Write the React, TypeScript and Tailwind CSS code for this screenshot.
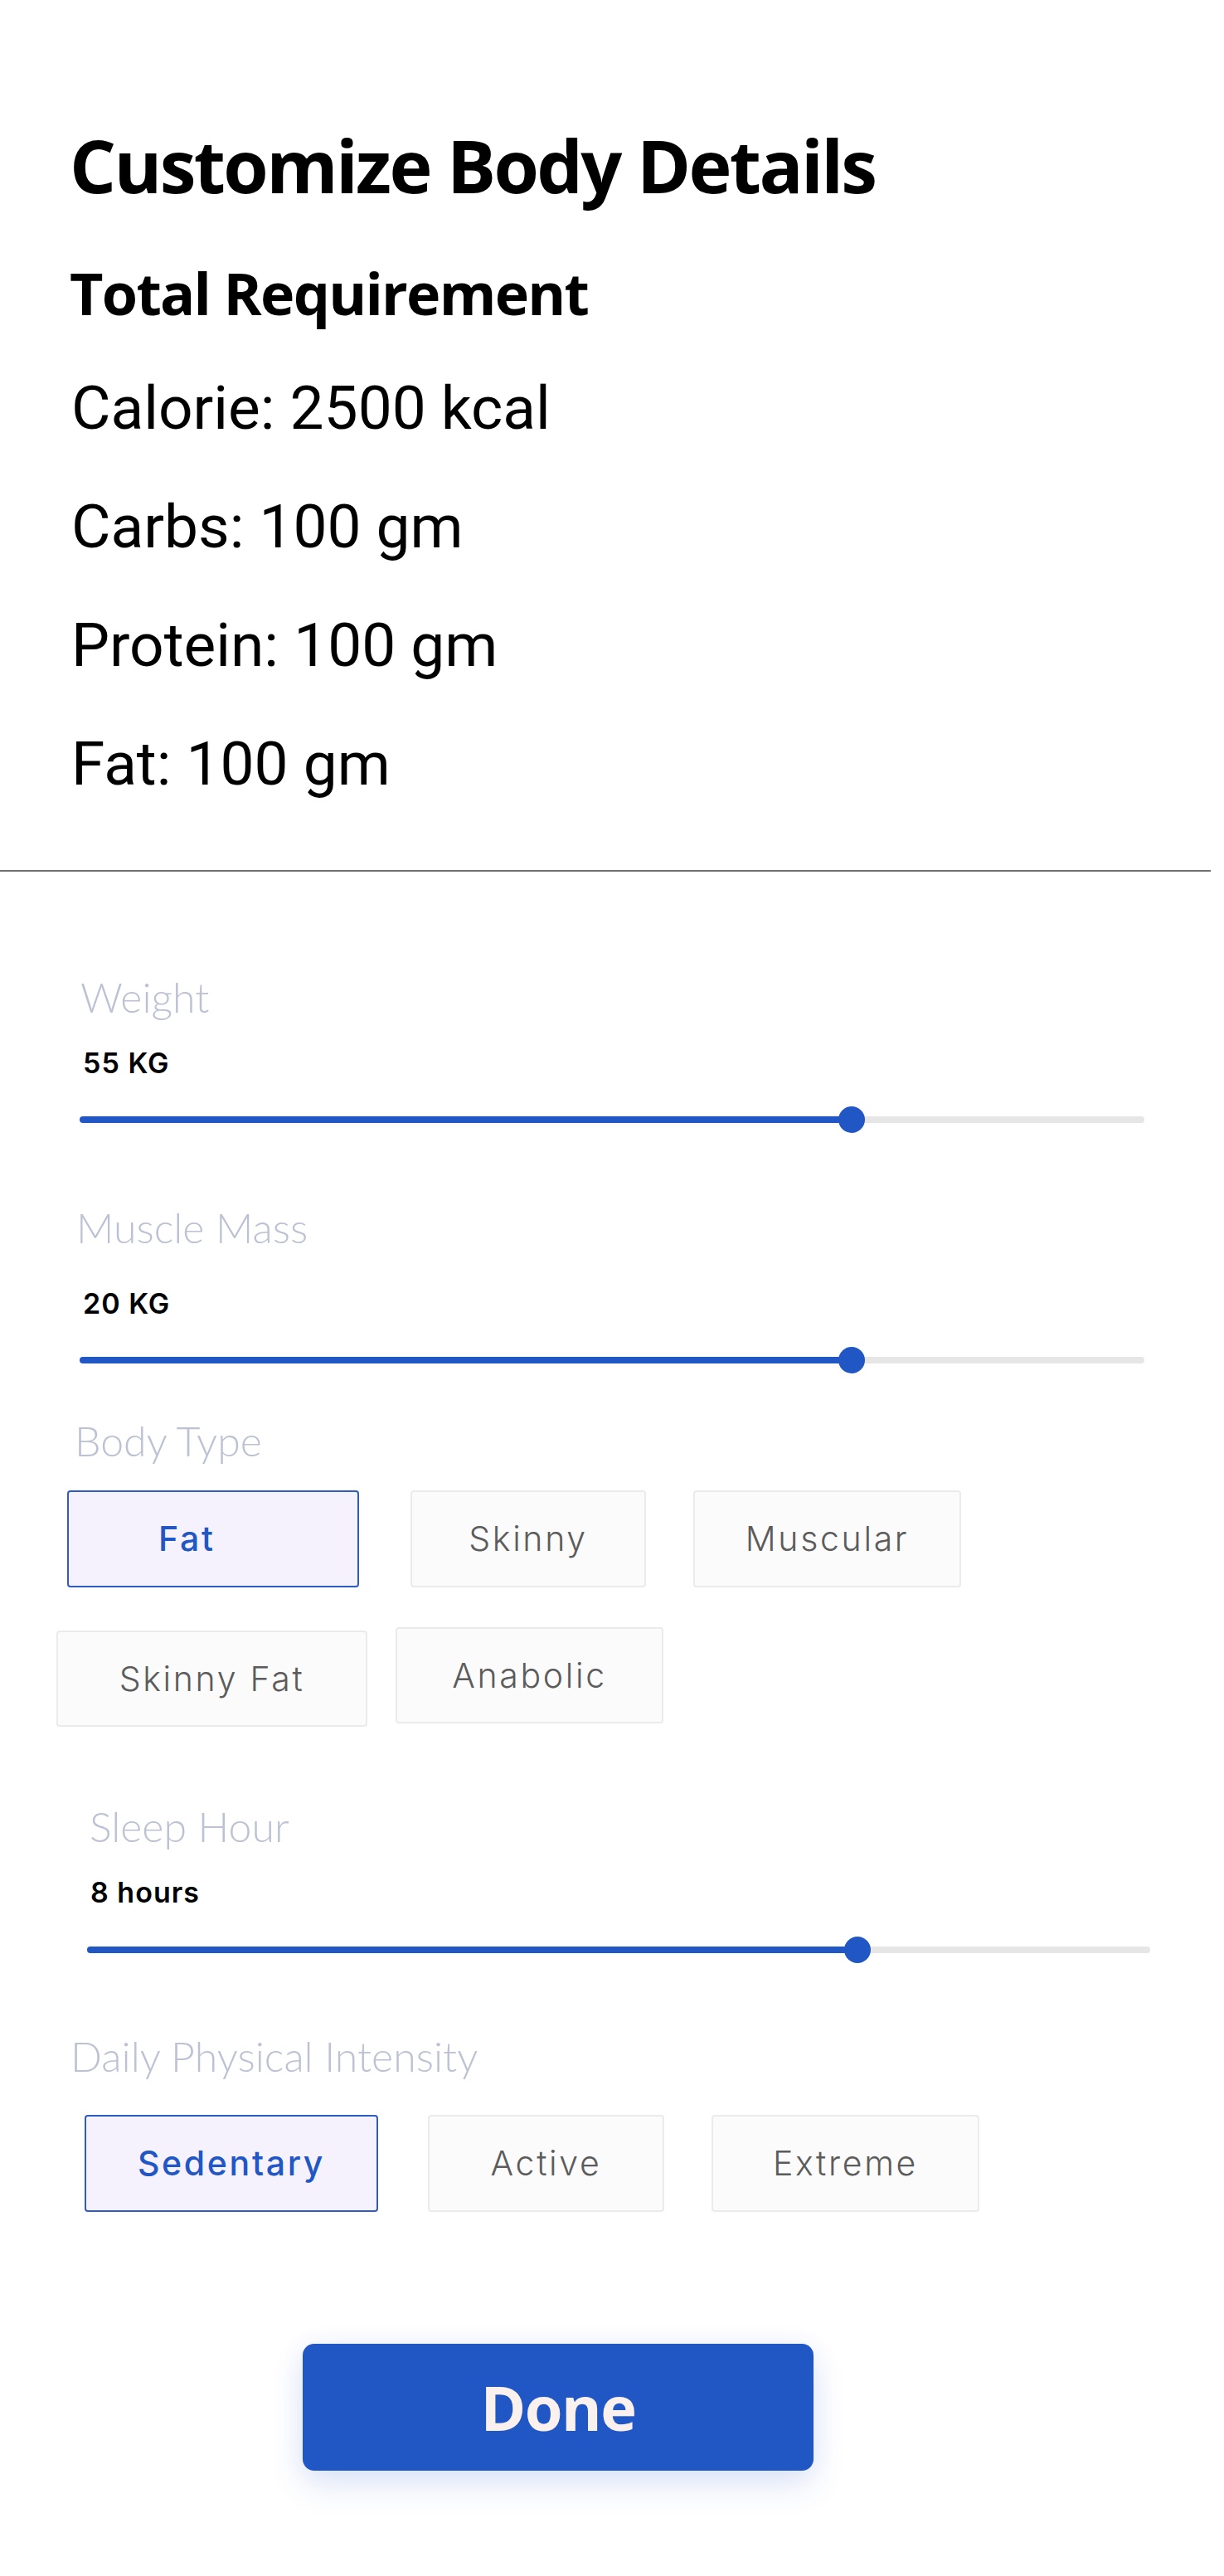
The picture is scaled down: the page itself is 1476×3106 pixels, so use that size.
import React from "react";

const Slider = ({ pct, className }: { pct: number; className: string }) => (
  <div className={`relative h-[32px] ${className}`}>
    <div className="absolute left-0 right-0 top-[12px] h-[8px] rounded-full bg-[#e6e6e6]" />
    <div
      className="absolute left-0 top-[12px] h-[8px] rounded-full bg-[#2157c5]"
      style={{ width: `${pct}%` }}
    />
    <div
      className="absolute top-0 -ml-[16px] h-[32px] w-[32px] rounded-full bg-[#2157c5]"
      style={{ left: `${pct}%` }}
    />
  </div>
);

const Chip = ({
  label,
  selected,
  className,
  textClass = "",
}: {
  label: string;
  selected?: boolean;
  className: string;
  textClass?: string;
}) => (
  <div
    className={`flex items-center rounded-[4px] border-2 font-['Inter',sans-serif] text-[41px] tracking-[0.065em] ${
      selected
        ? "border-[#2d5cc7] bg-[#f5f2fe] font-medium text-[#2157c5]"
        : "border-[#ebebeb] bg-[#fbfbfb] font-light text-[#5c5c5c]"
    } ${className}`}
  >
    <span className={`whitespace-nowrap leading-none ${textClass}`}>{label}</span>
  </div>
);

const Label = ({ children, className }: { children: React.ReactNode; className: string }) => (
  <div
    className={`font-['Lato',sans-serif] text-[50px] font-light leading-[50px] text-[#bcc2d4] ${className}`}
  >
    {children}
  </div>
);

const Value = ({ children, className }: { children: React.ReactNode; className: string }) => (
  <div
    className={`font-['Inter',sans-serif] text-[34px] font-semibold leading-[34px] tracking-[0.03em] text-black ${className}`}
  >
    {children}
  </div>
);

export default function App() {
  return (
    <div className="flex min-h-[3106px] w-[1476px] flex-col bg-white pb-[120px]">
      <h1 className="ml-[84px] mt-[155px] font-['Open_Sans',sans-serif] text-[88px] font-bold leading-[88px] tracking-[-0.03em] text-black">
        Customize Body Details
      </h1>
      <h2 className="ml-[84px] mt-[75px] font-['Open_Sans',sans-serif] text-[70px] font-bold leading-[70px] tracking-[-0.025em] text-black">
        Total Requirement
      </h2>
      <div className="ml-[86px] mt-[33px] font-['Roboto',sans-serif] text-[73px] leading-[143px] text-black">
        <p>Calorie: 2500 kcal</p>
        <p>Carbs: 100 gm</p>
        <p>Protein: 100 gm</p>
        <p>Fat: 100 gm</p>
      </div>
      <div className="mt-[56px] h-[2px] w-[1460px] bg-[#707070]" />

      <Label className="ml-[97px] mt-[126px]">Weight</Label>
      <Value className="ml-[100px] mt-[38px]">55 KG</Value>
      <Slider pct={72.5} className="ml-[96px] mt-[35px] w-[1284px]" />

      <Label className="ml-[92px] mt-[89px]">Muscle Mass</Label>
      <Value className="ml-[100px] mt-[50px]">20 KG</Value>
      <Slider pct={72.5} className="ml-[96px] mt-[35px] w-[1284px]" />

      <Label className="ml-[90px] mt-[56px]">Body Type</Label>
      <div className="mt-[35px] flex items-start">
        <Chip label="Fat" selected className="ml-[81px] h-[117px] w-[352px] pl-[108px]" />
        <Chip label="Skinny" className="ml-[62px] h-[117px] w-[284px] justify-center" />
        <Chip label="Muscular" className="ml-[57px] h-[117px] w-[323px] justify-center" />
      </div>
      <div className="mt-[48px] flex items-start">
        <Chip label="Skinny Fat" className="ml-[68px] mt-[4px] h-[116px] w-[375px] justify-center" />
        <Chip label="Anabolic" className="ml-[34px] h-[116px] w-[323px] justify-center" />
      </div>

      <Label className="ml-[108px] mt-[95px]">Sleep Hour</Label>
      <Value className="ml-[109px] mt-[38px]">8 hours</Value>
      <Slider pct={72.5} className="ml-[105px] mt-[36px] w-[1282px]" />

      <Label className="ml-[85px] mt-[87px]">Daily Physical Intensity</Label>
      <div className="mt-[46px] flex items-start">
        <Chip label="Sedentary" selected className="ml-[102px] h-[117px] w-[354px] justify-center" />
        <Chip label="Active" className="ml-[60px] h-[117px] w-[285px] justify-center" />
        <Chip label="Extreme" className="ml-[57px] h-[117px] w-[323px] justify-center" />
      </div>

      <button className="ml-[365px] mt-[159px] flex h-[153px] w-[616px] items-center justify-center rounded-[14px] bg-[#2057c4] font-['Open_Sans',sans-serif] text-[74px] font-bold tracking-[-0.02em] text-[#faf1ef] shadow-[0_18px_40px_rgba(32,87,196,0.14),0_0_30px_rgba(32,87,196,0.06)]">
        Done
      </button>
    </div>
  );
}
